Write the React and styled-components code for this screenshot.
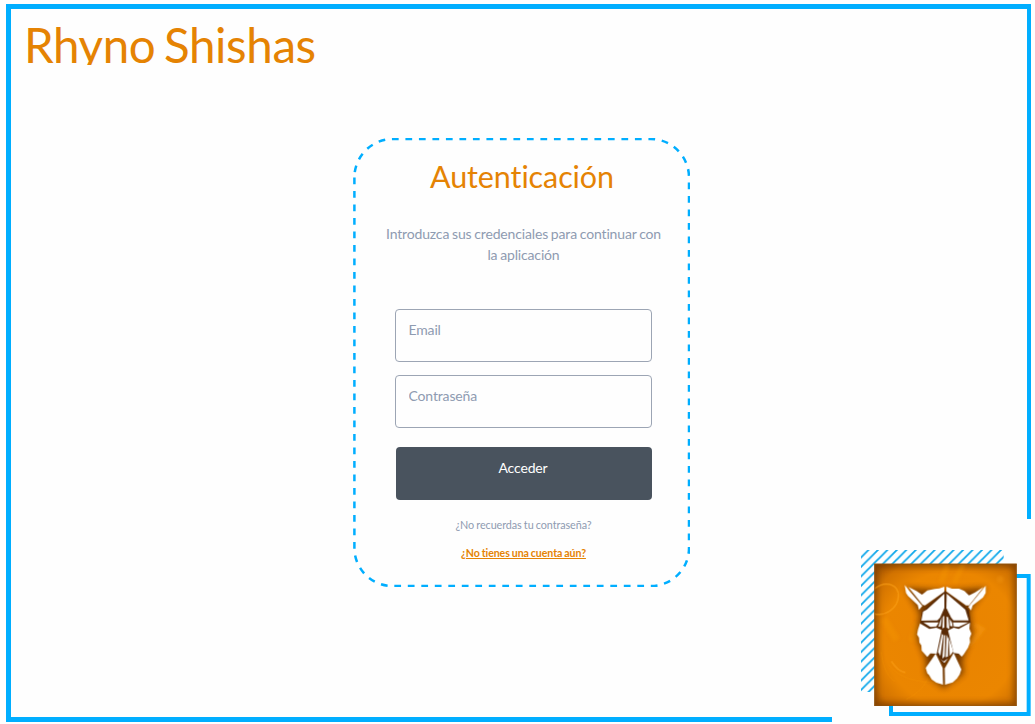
import React from "react";
import styled, { createGlobalStyle } from "styled-components";

const BLUE = "#00aeff";
const ORANGE = "#e58303";

const GlobalStyle = createGlobalStyle`
  * { box-sizing: border-box; }
  body { margin: 0; background: #fefefe; font-family: Lato, "Open Sans", sans-serif; font-variant-ligatures: none; }
  h1, h2, p { margin: 0; font-weight: 400; }
`;

const Page = styled.main`
  position: relative;
  width: 1035px;
  height: 724px;
  padding: 4px 4px 2.5px 6px;
  overflow: hidden;
`;

const Frame = styled.div`
  display: flex;
  flex-direction: column;
  height: 717.5px;
  width: 1025px;
  border: 4.6px solid ${BLUE};
  border-width: 5px 4px 5px 5px;
`;

const Brand = styled.h1`
  height: 56px;
  padding: 7px 0 0 13px;
  overflow: hidden;
  color: ${ORANGE};
  font-size: 47.5px;
  letter-spacing: -0.4px;
  word-spacing: -3px;
  line-height: 57px;
  white-space: nowrap;
`;

const Card = styled.section`
  position: relative;
  display: flex;
  flex-direction: column;
  align-items: center;
  width: 337px;
  height: 449px;
  margin: 73px 0 0 342px;
  padding: 18px 0 0 4px;
`;

const Outline = styled.svg`
  position: absolute;
  inset: 0;
  fill: none;
  stroke: ${BLUE};
  stroke-width: 2.5;
  stroke-dasharray: 6.75 6.75;
`;

const Heading = styled.h2`
  margin-right: 3px;
  color: ${ORANGE};
  font-size: 30.5px;
  letter-spacing: -0.1px;
  line-height: 40px;
`;

const Intro = styled.p`
  width: 284px;
  margin-top: 27px;
  color: #8e9bb1;
  font-size: 14px;
  letter-spacing: -0.16px;
  word-spacing: -0.6px;
  line-height: 21px;
  text-align: center;
`;

const Form = styled.form`
  display: flex;
  flex-direction: column;
  width: 257px;
  margin: 44px 1px 0 0;
`;

const Field = styled.input`
  height: 53px;
  margin-bottom: 13px;
  padding: 0 13px 12px;
  border: 1px solid #9ca5b4;
  border-radius: 4px;
  background: transparent;
  font: 14px Lato, sans-serif;
  letter-spacing: -0.15px;
  &::placeholder { color: #8e9bb1; opacity: 1; }
`;

const Submit = styled.button`
  height: 53px;
  margin: 6px 0 0 1px;
  padding: 0 1px 12px 0;
  border: 0;
  border-radius: 4px;
  background: #49535e;
  color: #fff;
  font: 14px Lato, sans-serif;
  letter-spacing: -0.15px;
`;

const CardLink = styled.a`
  margin-top: ${(p) => (p.$accent ? "14px" : "17px")};
  color: ${(p) => (p.$accent ? ORANGE : "#8e9bb1")};
  font-size: ${(p) => (p.$accent ? "10.6px" : "10.8px")};
  font-weight: ${(p) => (p.$accent ? 700 : 400)};
  letter-spacing: -0.08px;
  word-spacing: -0.5px;
  line-height: 15px;
  text-decoration: ${(p) => (p.$accent ? "underline" : "none")};
`;

const Emblem = styled.svg`
  position: absolute;
  right: 0;
  bottom: 0;
  display: block;
`;

function RhinoEmblem() {
  return (
    <Emblem width="215" height="214" viewBox="0 0 645 642">
      <defs>
        <pattern id="hatch" width="28.4" height="28.4" patternUnits="userSpaceOnUse" x="117" y="120">
          <path d="M-4 32.4L32.4-4M-4 4L4-4M24.4 32.4L32.4 24.4" stroke="#0ea7ea" strokeWidth="5.4" />
        </pattern>
        <radialGradient id="amber" cx=".54" cy=".53" r=".73">
          <stop offset="0" stopColor="#e98300" />
          <stop offset=".65" stopColor="#eb8600" />
          <stop offset=".85" stopColor="#d27300" />
          <stop offset="1" stopColor="#9e5002" />
        </radialGradient>
        <filter id="edgeBlur"><feGaussianBlur stdDeviation="10" /></filter>
        <filter id="shadow" x="-30%" y="-30%" width="160%" height="160%"><feGaussianBlur stdDeviation="9" /></filter>
        <filter id="soft"><feGaussianBlur stdDeviation="1.3" /></filter>
        <filter id="glow"><feGaussianBlur stdDeviation="4" /></filter>
        <clipPath id="tile"><path d="M163 161h427v427H163z" /></clipPath>
      </defs>
      <path d="M36 27H645V642H36z" fill="#fefefe" />
      <path d="M123 120h428v426H123z" fill="url(#hatch)" />
      <path d="M213 198H626V612H213z" fill="none" stroke={BLUE} strokeWidth="12" />
      <path d="M163 161h427v427H163z" fill="url(#amber)" />
      <g clipPath="url(#tile)">
        <path d="M163 161h427v427H163z" fill="none" stroke="#713704" strokeWidth="18" opacity=".75" filter="url(#edgeBlur)" />
        <g fill="none" stroke="#ffa51b" filter="url(#soft)">
          <path d="M164 236C198 210 238 223 235 261C232 296 195 320 163 312" strokeWidth="4" opacity=".6" />
          <path d="M214 454C230 478 240 483 256 488" strokeWidth="5" opacity=".5" />
          <path d="M208 466C240 504 278 518 385 520" strokeWidth="3" opacity=".2" />
          <path d="M183 425C190 482 210 507 225 514M258 568C298 550 320 520 324 498" strokeWidth="2" opacity=".35" />
        </g>
        <g fill="none" stroke="#ffa51b" filter="url(#glow)">
          <path d="M448 407L486 358L463 344" strokeWidth="16" opacity=".32" />
          <path d="M382 165L363 218M430 163L402 220" strokeWidth="16" opacity=".2" />
          <path d="M191 325L230 390M292 340L277 394" strokeWidth="22" opacity=".2" />
        </g>
        <circle cx="541" cy="208" r="10" fill="#ffa51b" opacity=".25" filter="url(#glow)" />
        <path d="M256 234L300 312L290 380L318 450L318 494L371 534L430 490L426 452L457 372L449 302L499 234L376 242z" fill="#552602" opacity=".8" filter="url(#shadow)" />
        <path d="M374 242L306 306L301 338L314 431L349 430L371 464L393 430L429 436L452 338L447 300z" fill="#592a05" />
        <g fill="#fff">
          <path d="M254 225L263 236L267 241L307 288L297 300L293 285L264 258L258 249z" />
          <path d="M265 231L289 243L306 254L322 241L344 237L358 235L373 230L373 245L315 286L308 285z" />
          <path d="M379 230L396 236L417 236L433 243L447 256L465 247L491 231L447 286L438 286L379 244z" />
          <path d="M497 227L497 249L489 262L458 286L453 301L445 291z" />
          <path d="M373 251L373 294L360 323L352 331L304 332L309 305L321 298z" />
          <path d="M380 251L436 299L446 331L400 331L393 322L379 294z" />
          <path d="M310 337L356 337L349 349L331 351z" />
          <path d="M399 337L445 337L416 351L401 349z" />
          <path d="M300 340L328 357L349 353L365 360L350 431L331 430L322 441L305 422L304 406L298 397L297 383L291 373L294 358z" />
          <path d="M450 338L448 356L454 371L449 384L450 397L444 413L431 433L425 440L416 431L401 429L384 361L401 353L416 357z" />
          <path d="M361 333L366 321L362 349L355 350zM369 319L373 318L373 352L367 355zM380 319L385 322L388 357L380 353zM389 327L396 338L398 349L390 348z" />
          <path d="M366 372L370 375L361 438L354 426zM372 378L376 374L374 439L367 446zM380 374L385 386L384 439L377 442zM386 381L400 424L389 438z" />
          <path d="M361 447L371 454L384 445L373 459z" />
          <path d="M347 431L368 474L369 524L349 518L335 508L327 495L322 490L317 474z" />
          <path d="M401 429L424 478L419 493L411 505L398 517L375 524L374 475z" />
        </g>
        <path d="M163 162H590M589 161V588M163 587H590M164 161V588" stroke="#8c5514" strokeWidth="3" fill="none" opacity=".8" />
      </g>
    </Emblem>
  );
}

export default function App() {
  return (
    <>
      <GlobalStyle />
      <Page>
        <Frame>
          <Brand>Rhyno Shishas</Brand>
          <Card>
            <Outline width="337" height="449" viewBox="0 0 337 449" aria-hidden="true">
              <path d="M1.4 39.5V410A38 38 0 0 0 39.4 448H298A38 38 0 0 0 336 410V39.5A38.5 38.5 0 0 0 297.5 1H39.9A38.5 38.5 0 0 0 1.4 39.5" />
            </Outline>
            <Heading>Autenticación</Heading>
            <Intro>Introduzca sus credenciales para continuar con la aplicación</Intro>
            <Form onSubmit={(event) => event.preventDefault()}>
              <Field type="email" placeholder="Email" aria-label="Email" />
              <Field type="password" placeholder="Contraseña" aria-label="Contraseña" />
              <Submit>Acceder</Submit>
            </Form>
            <CardLink>¿No recuerdas tu contraseña?</CardLink>
            <CardLink $accent>¿No tienes una cuenta aún?</CardLink>
          </Card>
        </Frame>
        <RhinoEmblem />
      </Page>
    </>
  );
}
